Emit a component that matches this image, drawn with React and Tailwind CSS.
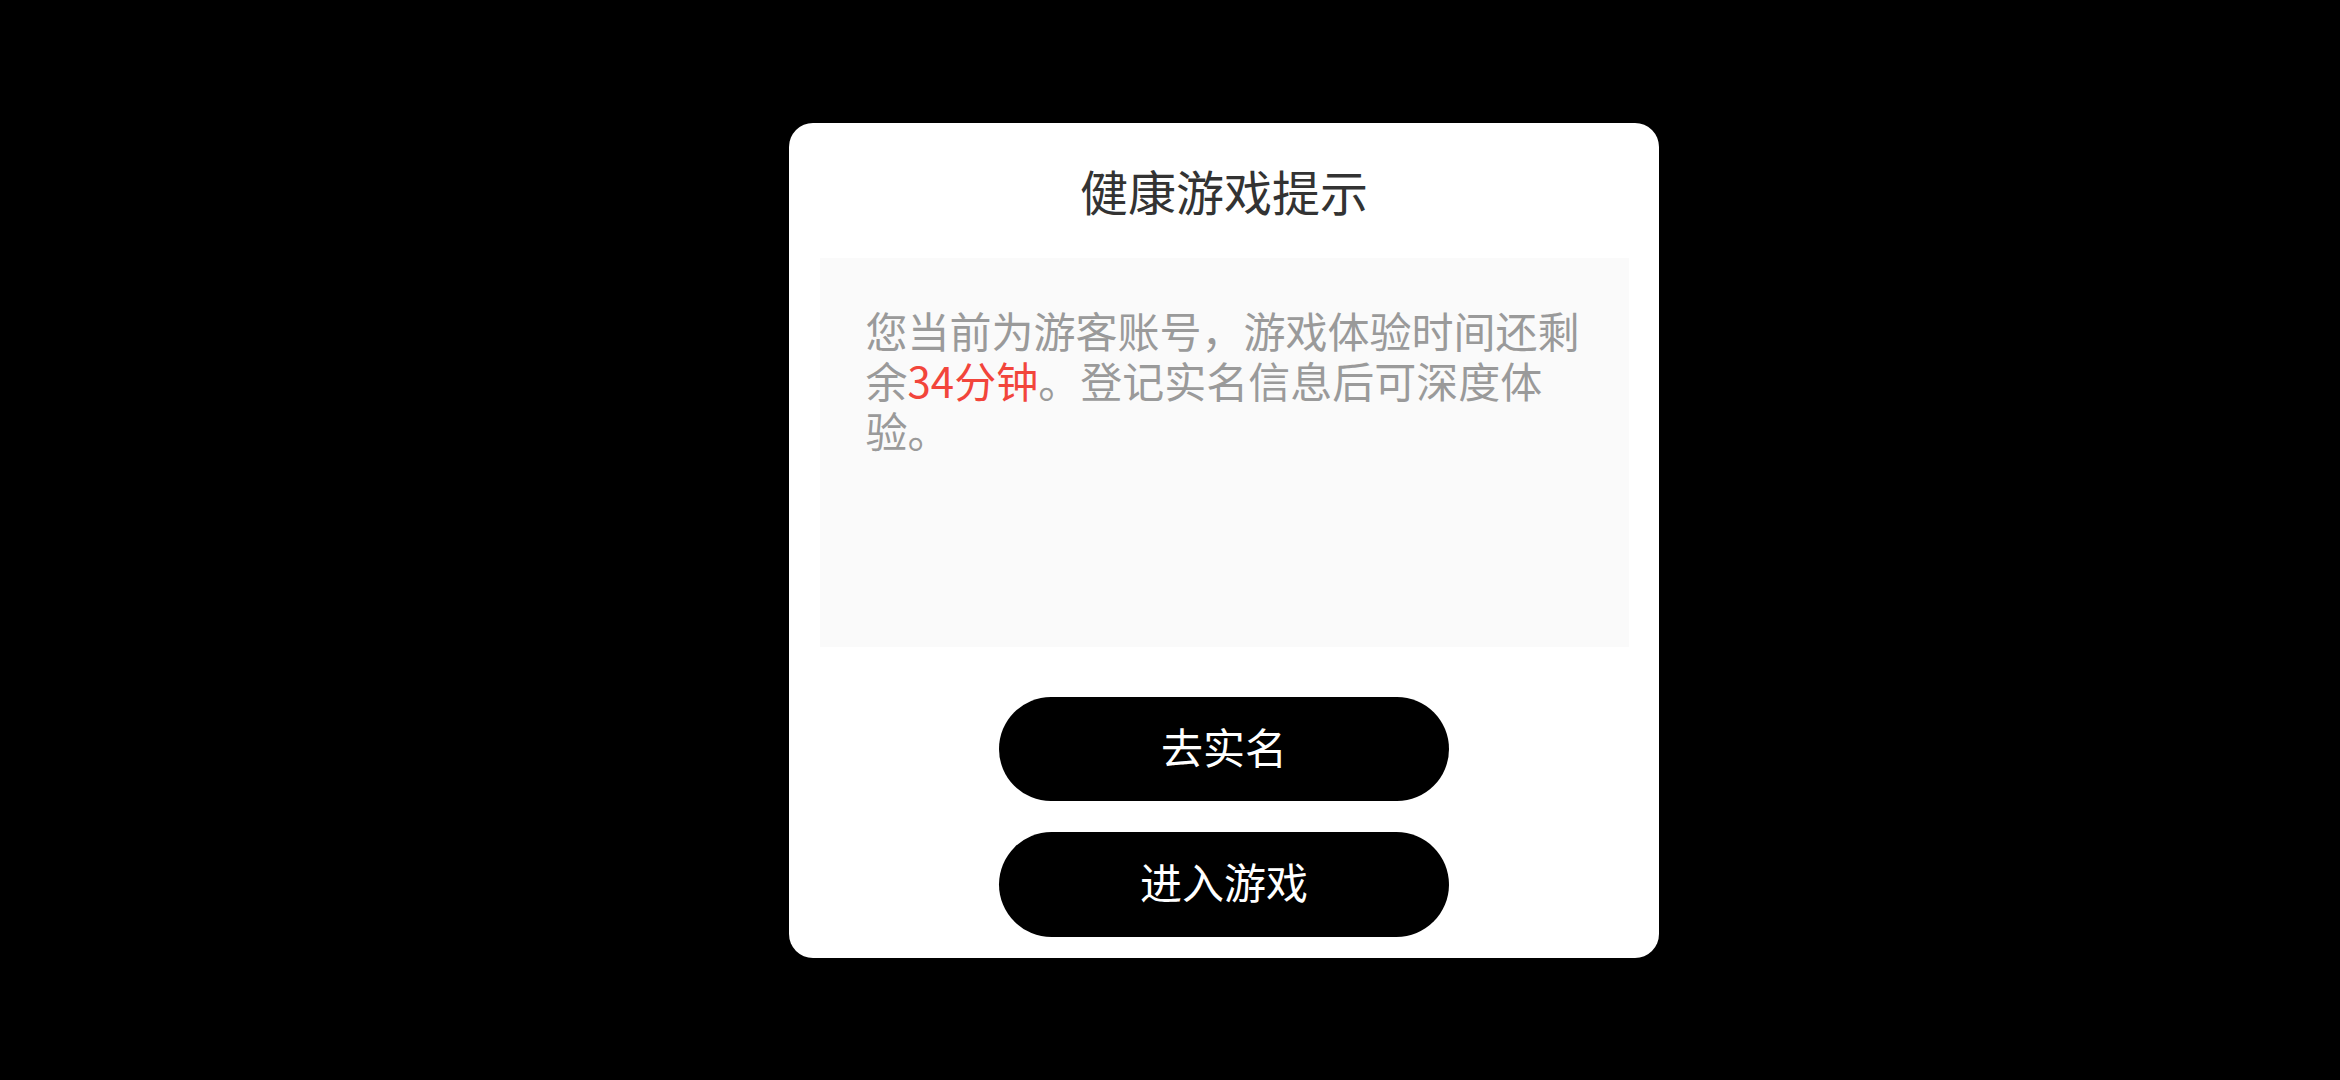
const App = () => {
  return (
    <div
      className="w-full h-[1080px] bg-black flex items-center justify-center pl-[108px]"
      style={{ fontFamily: '"Noto Sans CJK SC", "Noto Sans", sans-serif' }}
    >
      <div className="w-[870px] h-[835px] bg-white rounded-[24px] px-[30px] flex flex-col items-center">
        <div className="h-[135px] w-full flex items-center justify-center text-[48px] leading-none text-[#333333]">
          健康游戏提示
        </div>

        <div className="w-[809px] h-[389px] bg-[#fafafa] pt-[47px] px-[46px] text-[42px] leading-[50px] text-[#9a9a9a]">
          您当前为游客账号，游戏体验时间还剩余
          <span className="text-[#f2453b]">34分钟</span>
          。登记实名信息后可深度体验。
        </div>

        <button className="mt-[50px] w-[450px] h-[104px] pb-[6px] rounded-full bg-black text-white text-[42px] leading-none">
          去实名
        </button>
        <button className="mt-[31px] w-[450px] h-[105px] pb-[6px] rounded-full bg-black text-white text-[42px] leading-none">
          进入游戏
        </button>
      </div>
    </div>
  );
};

export default App;
